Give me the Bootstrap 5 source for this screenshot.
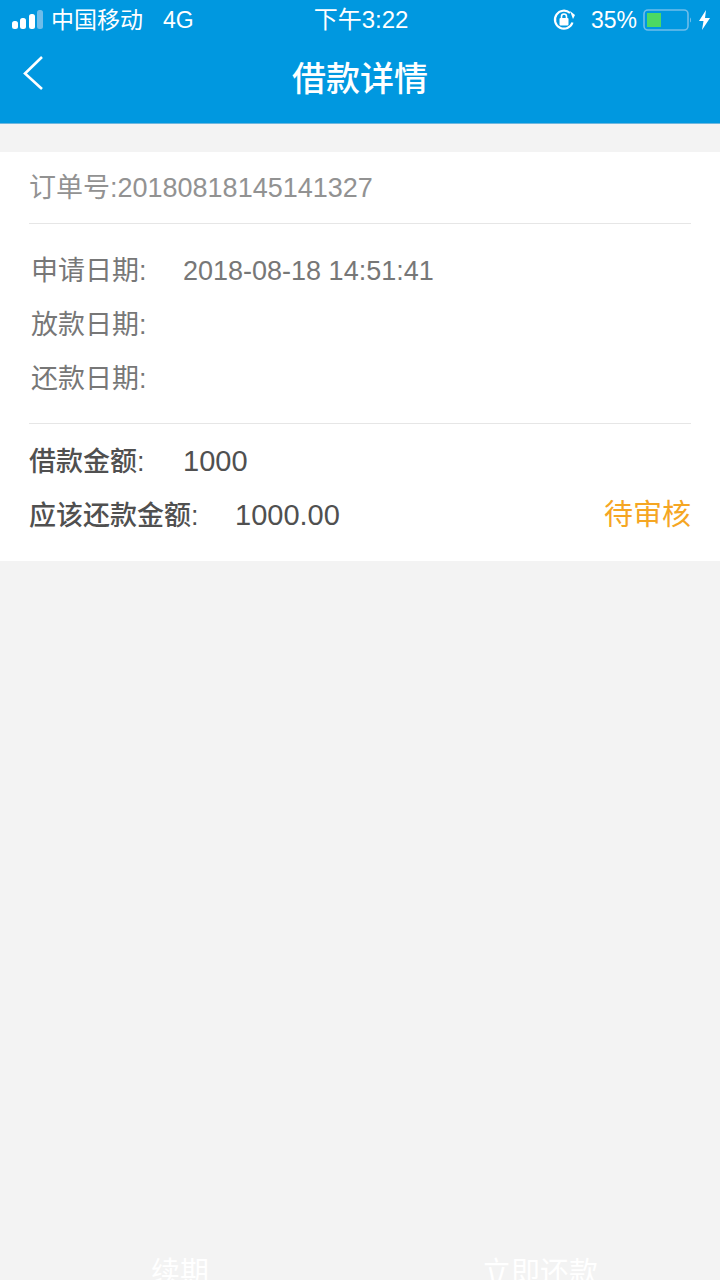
<!DOCTYPE html>
<html lang="zh-CN">
<head>
<meta charset="utf-8">
<title>借款详情</title>
<link rel="stylesheet" href="https://cdn.jsdelivr.net/npm/bootstrap@5.3.0/dist/css/bootstrap.min.css">
<style>
html,body{height:1280px;overflow:hidden}
body{background:#f3f3f3;font-family:"Liberation Sans","Noto Sans CJK SC",sans-serif;color:#777}
.screen{height:1280px;overflow:hidden}
.top-head{background:#0098e0;height:124px;border-bottom:1px solid #6fb7de;color:#fff}
.status-row{height:40px;padding:0 10px 0 12px;font-size:23px;line-height:40px}
.carrier{width:300px}
.sig{margin-right:8px}
.clock{font-size:24px}
.right-status{width:300px}
.pct{margin:0 6px 0 14px}
.title-row{height:83px}
.title-text{font-size:34px;font-weight:500;line-height:83px;margin-top:-2px}
.back-ico{left:22px;top:55px;width:22px;height:36px}
.sheet{background:#fff;margin-top:28px;padding:0 29px;height:409px}
.order-row{height:72px;line-height:72px;font-size:27px;color:#929292;border-bottom:1px solid #e6e6e6;white-space:nowrap}
.dates{height:200px;padding-top:20px;border-bottom:1px solid #e6e6e6;font-size:27px}
.info-row{height:54px;line-height:54px;white-space:nowrap;padding-left:2px}
.lab{display:inline-block;width:152px}
.amounts{padding-top:10px;font-size:29px;font-weight:500;color:#505050}
.amt-row{height:54px;line-height:54px;white-space:nowrap}
.amt-row .lab{font-size:27px;width:154px}
.amt-row .lab-wide{width:206px}
.amt-num{font-size:29px}
.state{color:#f5a623;font-size:29px;font-weight:400}
.foot-actions{margin-top:695px;color:#fff;font-size:29px;line-height:34px}
.foot-actions>div{width:360px}
</style>
</head>
<body>
<div class="screen">
  <header class="top-head position-relative">
    <div class="status-row d-flex justify-content-between align-items-center">
      <div class="carrier d-flex align-items-center">
        <svg class="sig" width="31" height="20" viewBox="0 0 31 20"><rect x="0" y="11" width="6" height="8" rx="2.5" fill="#fff"/><rect x="8" y="8" width="6" height="11" rx="2.5" fill="#fff"/><rect x="17" y="4" width="6" height="15" rx="2.5" fill="#fff"/><rect x="25" y="0" width="6" height="19" rx="2.5" fill="#6fbdea"/></svg>
        <span>中国移动</span><span class="ms-3 ps-1">4G</span>
      </div>
      <div class="clock">下午3:22</div>
      <div class="right-status d-flex align-items-center justify-content-end">
        <svg width="24" height="22" viewBox="0 0 24 22"><path d="M19.5 13.5A9 9 0 1 1 17 4" fill="none" stroke="#fff" stroke-width="2.2"/><path d="M15 1l5 4-2 4z" fill="#fff" transform="translate(2 1)"/><rect x="6.5" y="9" width="9" height="7.5" rx="1" fill="#fff"/><path d="M8.500 9V7.500a2.500 2.500 0 0 1 5 0V9" fill="none" stroke="#fff" stroke-width="1.600"/></svg>
        <span class="pct">35%</span>
        <svg width="48" height="22" viewBox="0 0 48 22"><rect x="1" y="1" width="44" height="20" rx="4" fill="none" stroke="#6fbdea" stroke-width="1.600"/><rect x="4" y="4" width="14" height="14" fill="#4cd964"/><path d="M47 8.500v5l1-1v-3z" fill="#6fbdea"/></svg>
        <svg class="ms-2" width="11" height="20" viewBox="0 0 11 20"><path d="M7 0L0 11h4.500L3 20l8-12H6z" fill="#fff"/></svg>
      </div>
    </div>
    <div class="title-row text-center"><div class="title-text">借款详情</div></div>
    <svg class="back-ico position-absolute" viewBox="0 0 22 36"><path d="M20 2L3 18.500 20 34" fill="none" stroke="#fff" stroke-width="2.600"/></svg>
  </header>
  <main class="sheet">
    <div class="order-row">订单号:20180818145141327</div>
    <div class="dates">
      <div class="info-row"><span class="lab">申请日期:</span>2018-08-18 14:51:41</div>
      <div class="info-row"><span class="lab">放款日期:</span></div>
      <div class="info-row"><span class="lab">还款日期:</span></div>
    </div>
    <div class="amounts">
      <div class="amt-row"><span class="lab">借款金额:</span><span class="amt-num">1000</span></div>
      <div class="amt-row d-flex justify-content-between">
        <div><span class="lab lab-wide">应该还款金额:</span><span class="amt-num">1000.00</span></div>
        <div class="state">待审核</div>
      </div>
    </div>
  </main>
  <footer class="foot-actions d-flex text-center">
    <div>续期</div>
    <div>立即还款</div>
  </footer>
</div>
<script src="https://cdn.jsdelivr.net/npm/bootstrap@5.3.0/dist/js/bootstrap.bundle.min.js"></script>
</body>
</html>
